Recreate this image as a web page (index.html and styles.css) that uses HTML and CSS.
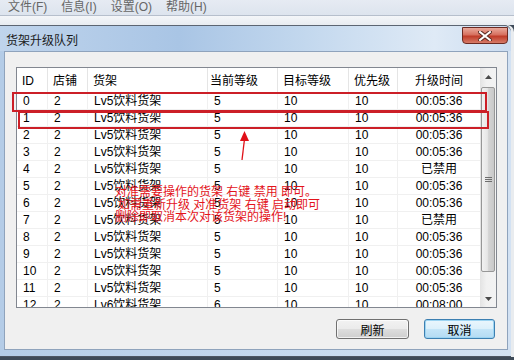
FILE: index.html
```html
<!DOCTYPE html>
<html lang="zh-CN">
<head>
    <meta charset="UTF-8">
    <title>货架升级队列</title>
    <link rel="stylesheet" href="styles.css">
</head>
<body>
    <div class="menubar">
        <span>文件(F)</span>
        <span>信息(I)</span>
        <span>设置(O)</span>
        <span>帮助(H)</span>
    </div>
    <div class="toolband"></div>

    <div class="dialog">
        <div class="titlebar">
            <span class="title">货架升级队列</span>
            <div class="close">
                <svg width="14" height="10" viewBox="0 0 14 10">
                    <path d="M2 1 L12 9 M12 1 L2 9" stroke="#5a2a22" stroke-width="4" stroke-linecap="square"/>
                    <path d="M2 1 L12 9 M12 1 L2 9" stroke="#ffffff" stroke-width="2" stroke-linecap="square"/>
                </svg>
            </div>
        </div>
        <div class="client">
            <div class="list">
                <div class="grid">
                    <div class="row head">
                        <span class="c-id">ID</span>
                        <span class="c-shop">店铺</span>
                        <span class="c-shelf">货架</span>
                        <span class="c-cur">当前等级</span>
                        <span class="c-tgt">目标等级</span>
                        <span class="c-pri">优先级</span>
                        <span class="c-time">升级时间</span>
                    </div>
                    <div class="row"><span class="c-id">0</span><span class="c-shop">2</span><span class="c-shelf">Lv5饮料货架</span><span class="c-cur">5</span><span class="c-tgt">10</span><span class="c-pri">10</span><span class="c-time">00:05:36</span></div>
                    <div class="row"><span class="c-id">1</span><span class="c-shop">2</span><span class="c-shelf">Lv5饮料货架</span><span class="c-cur">5</span><span class="c-tgt">10</span><span class="c-pri">10</span><span class="c-time">00:05:36</span></div>
                    <div class="row"><span class="c-id">2</span><span class="c-shop">2</span><span class="c-shelf">Lv5饮料货架</span><span class="c-cur">5</span><span class="c-tgt">10</span><span class="c-pri">10</span><span class="c-time">00:05:36</span></div>
                    <div class="row"><span class="c-id">3</span><span class="c-shop">2</span><span class="c-shelf">Lv5饮料货架</span><span class="c-cur">5</span><span class="c-tgt">10</span><span class="c-pri">10</span><span class="c-time">00:05:36</span></div>
                    <div class="row"><span class="c-id">4</span><span class="c-shop">2</span><span class="c-shelf">Lv5饮料货架</span><span class="c-cur">5</span><span class="c-tgt">10</span><span class="c-pri">10</span><span class="c-time">已禁用</span></div>
                    <div class="row"><span class="c-id">5</span><span class="c-shop">2</span><span class="c-shelf">Lv5饮料货架</span><span class="c-cur">5</span><span class="c-tgt">10</span><span class="c-pri">10</span><span class="c-time">00:05:36</span></div>
                    <div class="row"><span class="c-id">6</span><span class="c-shop">2</span><span class="c-shelf">Lv5饮料货架</span><span class="c-cur">5</span><span class="c-tgt">10</span><span class="c-pri">10</span><span class="c-time">00:05:36</span></div>
                    <div class="row"><span class="c-id">7</span><span class="c-shop">2</span><span class="c-shelf">Lv5饮料货架</span><span class="c-cur">5</span><span class="c-tgt">10</span><span class="c-pri">10</span><span class="c-time">已禁用</span></div>
                    <div class="row"><span class="c-id">8</span><span class="c-shop">2</span><span class="c-shelf">Lv5饮料货架</span><span class="c-cur">5</span><span class="c-tgt">10</span><span class="c-pri">10</span><span class="c-time">00:05:36</span></div>
                    <div class="row"><span class="c-id">9</span><span class="c-shop">2</span><span class="c-shelf">Lv5饮料货架</span><span class="c-cur">5</span><span class="c-tgt">10</span><span class="c-pri">10</span><span class="c-time">00:05:36</span></div>
                    <div class="row"><span class="c-id">10</span><span class="c-shop">2</span><span class="c-shelf">Lv5饮料货架</span><span class="c-cur">5</span><span class="c-tgt">10</span><span class="c-pri">10</span><span class="c-time">00:05:36</span></div>
                    <div class="row"><span class="c-id">11</span><span class="c-shop">2</span><span class="c-shelf">Lv5饮料货架</span><span class="c-cur">5</span><span class="c-tgt">10</span><span class="c-pri">10</span><span class="c-time">00:05:36</span></div>
                    <div class="row"><span class="c-id">12</span><span class="c-shop">2</span><span class="c-shelf">Lv6饮料货架</span><span class="c-cur">6</span><span class="c-tgt">10</span><span class="c-pri">10</span><span class="c-time">00:08:00</span></div>
                </div>
                <div class="vscroll">
                    <div class="sb-btn">
                        <svg width="7" height="4" viewBox="0 0 7 4"><path d="M0 4 L3.5 0 L7 4 Z" fill="#4a4a4a"/></svg>
                    </div>
                    <div class="sb-thumb">
                        <div class="grip"></div>
                    </div>
                    <div class="sb-space"></div>
                    <div class="sb-btn">
                        <svg width="7" height="4" viewBox="0 0 7 4"><path d="M0 0 L7 0 L3.5 4 Z" fill="#4a4a4a"/></svg>
                    </div>
                </div>
            </div>
            <div class="buttons">
                <button class="btn btn-refresh">刷新</button>
                <button class="btn btn-default">取消</button>
            </div>
        </div>
    </div>

    <!-- 标注 -->
    <div class="mark mark-1"></div>
    <div class="mark mark-2"></div>
    <svg class="arrow" width="14" height="34" viewBox="0 0 14 34">
        <path d="M7.5 9 L5 30" stroke="#e01018" stroke-width="1.3" fill="none"/>
        <path d="M3 11 L7.5 1 L12 11 Z" fill="#e01018"/>
    </svg>
    <div class="note">
        <div>对准需要操作的货架 右键 禁用 即可。</div>
        <div class="note-2">如需重新升级 对准货架 右键 启动即可</div>
        <div>删除即取消本次对该货架的操作!</div>
    </div>
</body>
</html>
```

FILE: styles.css
```css
body {
    margin: 0;
    width: 514px;
    height: 360px;
    overflow: hidden;
    position: relative;
    background-color: #3e4a58;
    font-family: 'Liberation Sans', 'Noto Sans CJK SC', sans-serif;
    font-size: 12px;
    color: #000;
}

.menubar {
    height: 15px;
    display: flex;
    gap: 14px;
    padding-left: 8px;
    background: linear-gradient(to bottom, #e6ebf3, #dde4ee);
    color: #666;
    line-height: 14px;
}

.toolband {
    height: 9px;
    border-top: 1px solid #b6bfcc;
    background: linear-gradient(to bottom, #f4f6f9, #e8ecf1);
}

.dialog {
    width: 504px;
    margin-right: 3px;
    padding: 0 3px 6px 4px;
    border-top: 1px solid #5c6572;
    border-bottom: 1px solid #4d5663;
    border-top-right-radius: 7px;
    background: linear-gradient(to right, #b4cce7, #c4d8ee 50%, #d3e2f3);
    box-shadow: 3px 0 0 #e9ecef;
}

.titlebar {
    height: 25px;
    display: flex;
    justify-content: space-between;
    align-items: flex-start;
    margin-left: -4px;
    margin-right: -3px;
    padding-left: 6px;
    padding-right: 3px;
    border-top-right-radius: 7px;
    background: linear-gradient(to right, #bfd4ec, #a9c5e5 35%, #c3d8ee 60%, #dfeaf6 85%, #cbdcf0);
}

.title {
    line-height: 30px;
    color: #1a1a1a;
}

.close {
    width: 46px;
    height: 17px;
    margin-top: 1px;
    box-sizing: border-box;
    border: 1px solid #6b2a22;
    border-radius: 0 0 4px 4px;
    background: linear-gradient(to bottom, #e9a99b, #d7705f 45%, #c03c29 55%, #d67b68);
    display: flex;
    justify-content: center;
    align-items: center;
}

.client {
    box-sizing: border-box;
    height: 299px;
    padding: 15px 0 0 11px;
    border: 1px solid #8fa3bc;
    background-color: #f0f0f0;
}

.list {
    width: 481px;
    height: 241px;
    box-sizing: border-box;
    border: 1px solid #828790;
    background-color: #ffffff;
    display: flex;
}

.grid {
    width: 463px;
    overflow: hidden;
}

.row {
    display: flex;
    height: 17px;
}

.row span {
    box-sizing: border-box;
    height: 17px;
    padding-left: 6px;
    line-height: 16px;
    border-right: 1px solid #f0f0f0;
    border-bottom: 1px solid #f0f0f0;
    white-space: nowrap;
    overflow: hidden;
}

.row.head {
    height: 25px;
}

.row.head span {
    height: 25px;
    line-height: 27px;
    padding-left: 5px;
    border-right: 1px solid #e5e5e5;
    border-bottom: 1px solid #ebebeb;
}

.row.head .c-cur {
    padding-left: 2px;
}

.c-id { width: 31px; }
.c-shop { width: 40px; }
.c-shelf { width: 120px; }
.c-cur { width: 70px; }
.c-tgt { width: 71px; }
.c-pri { width: 49px; }

.row .c-time {
    width: 82px;
    padding-left: 0;
    text-align: center;
    border-right: none;
}

.row.head .c-time {
    padding-left: 0;
    border-right: none;
}

.vscroll {
    width: 16px;
    display: flex;
    flex-direction: column;
    background: linear-gradient(to right, #e3e3e3, #f1f1f1 40%, #f3f3f3);
}

.sb-btn {
    height: 17px;
    display: flex;
    justify-content: center;
    align-items: center;
}

.sb-thumb {
    height: 185px;
    margin: 2px 1px 0 1px;
    box-sizing: border-box;
    border: 1px solid #979797;
    border-radius: 2px;
    background: linear-gradient(to right, #f2f2f2, #e6e6e6 45%, #d4d4d4 55%, #c9c9c9);
    display: flex;
    justify-content: center;
    align-items: center;
}

.grip {
    width: 7px;
    height: 5px;
    background: repeating-linear-gradient(to bottom, #6e6e6e 0, #6e6e6e 1px, transparent 1px, transparent 2px);
}

.sb-space {
    flex: 1;
}

.buttons {
    display: flex;
    justify-content: flex-end;
    gap: 15px;
    margin-top: 11px;
    padding-right: 12px;
}

.btn {
    height: 20px;
    padding: 0;
    box-sizing: border-box;
    border: 1px solid #707070;
    border-radius: 3px;
    font-family: 'Liberation Sans', 'Noto Sans CJK SC', sans-serif;
    font-size: 12px;
    color: #000;
    background: linear-gradient(to bottom, #f2f2f2, #ebebeb 48%, #dddddd 52%, #cfcfcf);
    box-shadow: inset 0 0 0 1px rgba(255, 255, 255, 0.7);
}

.btn-refresh {
    width: 73px;
}

.btn-default {
    width: 71px;
    border-color: #3c7fb1;
    background: linear-gradient(to bottom, #eaf6fd, #dcf0fb 48%, #c4e5f8 52%, #b4dbf3);
    box-shadow: inset 0 0 0 1px #9cd4f2;
}

/* 标注 */
.mark {
    position: absolute;
    box-sizing: border-box;
    border: 2px solid #cc1f27;
}

.mark-1 {
    left: 12px;
    top: 92px;
    width: 475px;
    height: 20px;
}

.mark-2 {
    left: 18px;
    top: 111px;
    width: 471px;
    height: 18px;
}

.arrow {
    position: absolute;
    left: 237px;
    top: 130px;
}

.note {
    position: absolute;
    left: 115px;
    top: 186px;
    color: #e3141b;
    font-size: 12px;
    line-height: 12.5px;
    white-space: nowrap;
}

.note-2 {
    padding-left: 3px;
}
```
